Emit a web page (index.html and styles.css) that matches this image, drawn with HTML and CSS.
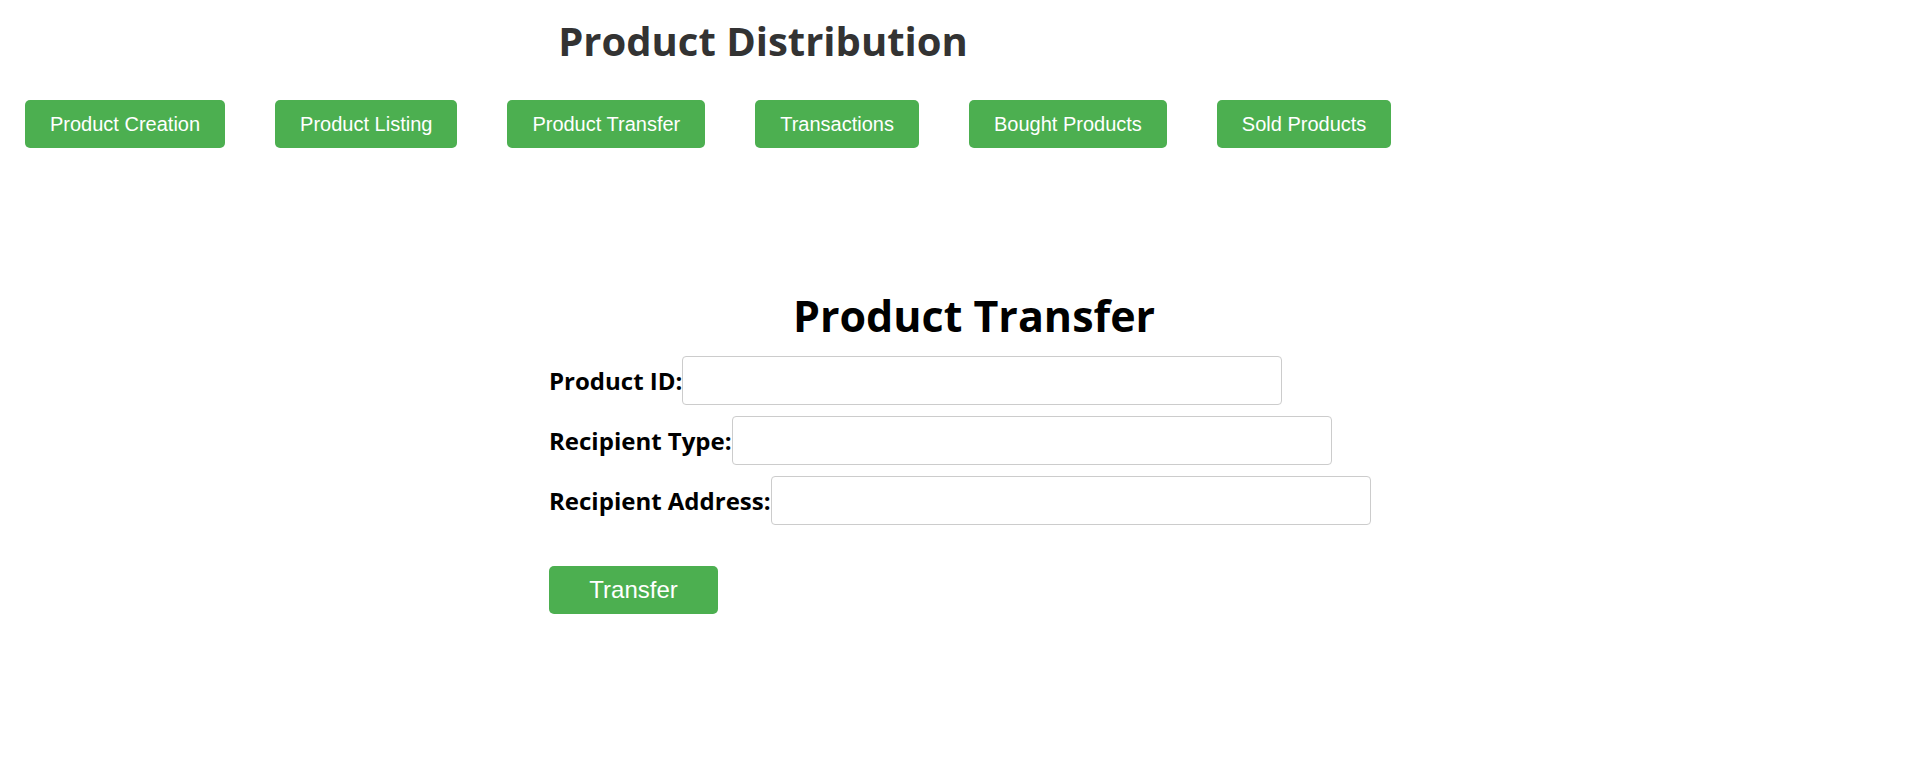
FILE: index.html
```html
<!DOCTYPE html>
<html lang="en">
<head>
<meta charset="utf-8">
<title>Product Distribution</title>
<link rel="stylesheet" href="styles.css">
</head>
<body>
  <header class="site-header">
    <h1 class="site-title">Product Distribution</h1>
    <nav class="nav">
      <button class="nav-btn" type="button">Product Creation</button>
      <button class="nav-btn" type="button">Product Listing</button>
      <button class="nav-btn" type="button">Product Transfer</button>
      <button class="nav-btn" type="button">Transactions</button>
      <button class="nav-btn" type="button">Bought Products</button>
      <button class="nav-btn" type="button">Sold Products</button>
    </nav>
  </header>
  <main class="panel">
    <h2 class="panel-title">Product Transfer</h2>
    <form class="form">
      <div class="row">
        <label class="label" for="pid">Product ID:</label>
        <input class="input" id="pid" type="text">
      </div>
      <div class="row">
        <label class="label" for="rtype">Recipient Type:</label>
        <input class="input" id="rtype" type="text">
      </div>
      <div class="row">
        <label class="label" for="raddr">Recipient Address:</label>
        <input class="input" id="raddr" type="text">
      </div>
      <button class="submit-btn" type="button">Transfer</button>
    </form>
  </main>
</body>
</html>
```

FILE: styles.css
```css
html, body {
  margin: 0;
  padding: 0;
  background: #ffffff;
}

body {
  font-family: "Open Sans", "Liberation Sans", Arial, sans-serif;
  color: #000;
}

.site-header {
  display: flex;
  flex-direction: column;
}

.site-title {
  width: 1526px;
  margin: 14px 0 0;
  text-align: center;
  font-size: 40px;
  line-height: 54px;
  font-weight: 700;
  color: #333333;
}

.nav {
  display: flex;
  gap: 50px;
  padding: 0 25px;
  margin-top: 32px;
}

.nav-btn {
  font-family: "Liberation Sans", Arial, sans-serif;
  font-size: 20px;
  line-height: 24px;
  padding: 12px 25px;
  border: none;
  border-radius: 5px;
  background: #4caf50;
  color: #ffffff;
  cursor: pointer;
}

.panel {
  width: 850px;
  margin: 139px 0 0 549px;
}

.panel-title {
  margin: 0;
  text-align: center;
  font-size: 43px;
  line-height: 58px;
  font-weight: 700;
  color: #000;
}

.form {
  display: flex;
  flex-direction: column;
  align-items: flex-start;
  margin-top: 11px;
}

.row {
  display: flex;
  align-items: center;
  margin-bottom: 11px;
}

.label {
  font-size: 24px;
  font-weight: 700;
  line-height: 33px;
}

.input {
  box-sizing: border-box;
  width: 600px;
  height: 49px;
  border: 1px solid #cccccc;
  border-radius: 4px;
  margin: 0;
  padding: 0 10px;
  font-size: 18px;
}

.submit-btn {
  box-sizing: border-box;
  width: 169px;
  height: 48px;
  margin-top: 30px;
  border: none;
  border-radius: 5px;
  background: #4caf50;
  color: #fff;
  font-family: "Liberation Sans", Arial, sans-serif;
  font-size: 24px;
  padding: 0;
  cursor: pointer;
}
```
